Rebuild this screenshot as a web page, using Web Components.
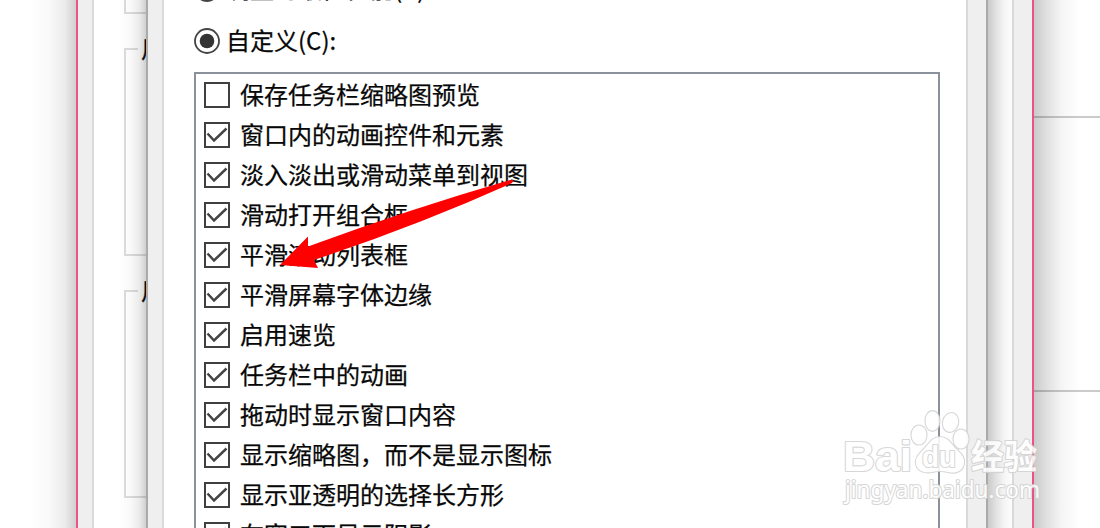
<!DOCTYPE html>
<html lang="zh-CN">
<head>
<meta charset="utf-8">
<title>性能选项</title>
<style>
  body {
    margin: 0;
    width: 1100px;
    height: 528px;
    overflow: hidden;
    background: #fff;
    color: #080808;
    font: 24px/40px "Noto Sans CJK SC", sans-serif;
    -webkit-text-stroke: .25px #080808;
  }
</style>
</head>
<body>
<desk-top>
  <back-pane></back-pane>
  <window-frame class="outer" style="--left: 76px; --width: 958px; --edge: #ec5288; --shade: 46px">
    <group-box style="--height: 14px; --cut: 0"></group-box>
    <group-box label="用" style="--height: 208px"></group-box>
    <group-box label="用" style="--height: 208px"></group-box>
  </window-frame>
  <window-frame style="--left: 146px; --width: 842px; --edge: #aaa; --shade: 27px">
    <radio-option style="height: 52px; margin-top: -37px; --lift: 2px">调整为最佳性能(P):</radio-option>
    <radio-option style="height: 52px">自定义(C):</radio-option>
    <option-list>
      <check-option>保存任务栏缩略图预览</check-option>
      <check-option checked>窗口内的动画控件和元素</check-option>
      <check-option checked>淡入淡出或滑动菜单到视图</check-option>
      <check-option checked>滑动打开组合框</check-option>
      <check-option checked>平滑滚动列表框</check-option>
      <check-option checked>平滑屏幕字体边缘</check-option>
      <check-option checked>启用速览</check-option>
      <check-option checked>任务栏中的动画</check-option>
      <check-option checked>拖动时显示窗口内容</check-option>
      <check-option checked>显示缩略图，而不是显示图标</check-option>
      <check-option checked>显示亚透明的选择长方形</check-option>
      <check-option checked>在窗口下显示阴影</check-option>
    </option-list>
  </window-frame>
  <pointer-arrow></pointer-arrow>
  <site-watermark></site-watermark>
</desk-top>

<script>
// Shared base: puts markup and styles into an open shadow root
class BaseElement extends HTMLElement {
  constructor() {
    super();
    this.attachShadow({ mode: "open" });
  }

  connectedCallback() {
    this.shadowRoot.innerHTML = `<style>${this.styles()}</style>${this.markup()}`;
  }

  styles() { return ":host { display: block; }"; }
  markup() { return "<slot></slot>"; }
}

class DeskTop extends BaseElement {
  styles() {
    return `:host { display: block; position: relative; width: 1100px; height: 528px; overflow: hidden; }`;
  }
}

// Pane behind the windows, only its two divider lines are visible
class BackPane extends BaseElement {
  styles() {
    return `
      :host { display: grid; grid-template-rows: 116px 274px 1fr; gap: 0; height: 528px; margin-left: 1034px; }
      div + div { border-top: 2px solid #cbcbcb; }
    `;
  }
  markup() { return "<div></div><div></div><div></div>"; }
}

class WindowFrame extends BaseElement {
  styles() {
    return `
      :host {
        position: absolute;
        left: var(--left);
        top: 0;
        width: var(--width);
        height: 528px;
        box-sizing: border-box;
        display: grid;
        grid-template-columns: 14px 1fr 18px;
        background: #efefef;
        border: solid var(--edge);
        border-width: 0 2px;
      }
      /* soft shadow on both sides of the window */
      :host::before, :host::after {
        content: "";
        position: absolute;
        top: 0;
        bottom: 0;
        width: var(--shade);
        pointer-events: none;
      }
      :host::before {
        right: calc(100% + 2px);
        background: linear-gradient(to left, rgba(0,10,5,.19), rgba(0,0,0,.08) 25%, rgba(0,0,0,.025) 58%, transparent);
      }
      :host::after {
        left: calc(100% + 2px);
        background: linear-gradient(to right, rgba(0,5,5,.21), rgba(0,0,0,.12) 28%, rgba(0,0,0,.04) 60%, transparent);
      }
      .content {
        grid-column: 2;
        box-sizing: border-box;
        height: 528px;
        overflow: hidden;
        display: flex;
        flex-direction: column;
        background: #fff;
        border: solid #dadada;
        border-width: 0 2px;
        padding: 0 26px 0 30px;
      }
      :host(.outer) .content { gap: 34px; padding: 0 30px; }
    `;
  }
  markup() { return `<div class="content"><slot></slot></div>`; }
}

class GroupBox extends BaseElement {
  styles() {
    return `
      :host {
        flex: none;
        display: grid;
        grid-template-columns: 12px 1fr;
        height: var(--height);
        box-sizing: border-box;
        border: 2px solid #dcdcdc;
        border-top: 0;
      }
      .rule { height: var(--cut, 2px); background: #dcdcdc; }
      .label { margin: -18px 0 0 3px; line-height: 36px; height: 36px; }
    `;
  }
  markup() {
    return `<div class="rule"></div><div class="label">${this.getAttribute("label") || ""}</div>`;
  }
}

class RadioOption extends BaseElement {
  styles() {
    return `
      :host { flex: none; display: flex; align-items: center; gap: 6px; }
      svg { flex: none; width: 26px; height: 26px; }
      span { white-space: nowrap; padding-bottom: var(--lift, 2px); }
    `;
  }
  markup() {
    return `
      <svg viewBox="0 0 26 26">
        <circle cx="13" cy="13" r="12" fill="#fff" stroke="#444" stroke-width="1.8"/>
        <circle cx="13" cy="13" r="7.3" fill="#333"/>
      </svg>
      <span><slot></slot></span>
    `;
  }
}

class OptionList extends BaseElement {
  styles() {
    return `
      :host {
        flex: none;
        display: flex;
        flex-direction: column;
        height: 520px;
        margin-top: 5px;
        box-sizing: border-box;
        border: 2px solid #8b919b;
        padding: 1px 8px;
      }
    `;
  }
}

class CheckOption extends BaseElement {
  styles() {
    return `
      :host { flex: none; display: flex; align-items: center; gap: 10px; height: 40px; }
      svg { flex: none; width: 26px; height: 26px; }
      span { white-space: nowrap; padding-bottom: 2px; }
    `;
  }
  markup() {
    const tick = this.hasAttribute("checked")
      ? `<path d="M3.500 11.500 10 18.500 22.500 6.500" fill="none" stroke="#444" stroke-width="2.5"/>`
      : "";
    return `
      <svg viewBox="0 0 26 26">
        <rect x="1" y="1" width="24" height="24" fill="#fff" stroke="#404040" stroke-width="2"/>
        ${tick}
      </svg>
      <span><slot></slot></span>
    `;
  }
}

class PointerArrow extends BaseElement {
  styles() {
    return `
      :host { position: absolute; left: 280px; top: 178px; width: 236px; height: 92px; }
      svg { display: block; }
    `;
  }
  markup() {
    return `
      <svg width="236" height="92" viewBox="0 0 236 92">
        <path d="M0 87 28 58.500V68.500Q130 31 230 2Q235 1 232 5Q140 46.500 34 82L38 90Z" fill="#f00"/>
      </svg>
    `;
  }
}

// White lettering with a thin grey outline
class SiteWatermark extends BaseElement {
  styles() {
    return `
      :host { position: absolute; left: 836px; top: 402px; width: 216px; height: 108px; -webkit-text-stroke: 0; }
      svg { display: block; opacity: .88; }
      text, .paw { fill: #fff; stroke: #d2d2d2; stroke-width: 2.2; paint-order: stroke; stroke-linejoin: round; }
      .brand { font: 700 43px "Liberation Sans", sans-serif; }
      .du { font: 700 30px "Liberation Sans", sans-serif; }
      .cjk { font: 700 34px "Noto Sans CJK SC", sans-serif; }
      .url { font: 400 23.5px "Noto Sans", sans-serif; }
    `;
  }
  markup() {
    return `
      <svg width="216" height="108" viewBox="836 402 216 108">
        <text class="brand" x="843" y="471" textLength="69" lengthAdjust="spacingAndGlyphs">Bai</text>
        <g class="paw">
          <ellipse cx="919" cy="435" rx="7.500" ry="9.500"/>
          <ellipse cx="932.500" cy="421" rx="7" ry="9.800"/>
          <ellipse cx="950.500" cy="422.300" rx="7.500" ry="9.500" transform="rotate(15 950 422.500)"/>
          <ellipse cx="961" cy="439" rx="7.500" ry="9.500"/>
          <path d="M940 437C933 437 930 442 925 448C919 454 915 458 916 464C918 472 925 473 932 472Q940 470 948 472C956 474 963 471 964 463C965 457 960 453 955 448C950 442 947 437 940 437Z"/>
        </g>
        <text class="du" x="922" y="467" textLength="34" lengthAdjust="spacingAndGlyphs">du</text>
        <text class="cjk" x="971" y="469" textLength="66" lengthAdjust="spacingAndGlyphs">经验</text>
        <text class="url" x="845" y="498" textLength="195" lengthAdjust="spacingAndGlyphs">jingyan.baidu.com</text>
      </svg>
    `;
  }
}

customElements.define("desk-top", DeskTop);
customElements.define("back-pane", BackPane);
customElements.define("window-frame", WindowFrame);
customElements.define("group-box", GroupBox);
customElements.define("radio-option", RadioOption);
customElements.define("option-list", OptionList);
customElements.define("check-option", CheckOption);
customElements.define("pointer-arrow", PointerArrow);
customElements.define("site-watermark", SiteWatermark);
</script>
</body>
</html>
